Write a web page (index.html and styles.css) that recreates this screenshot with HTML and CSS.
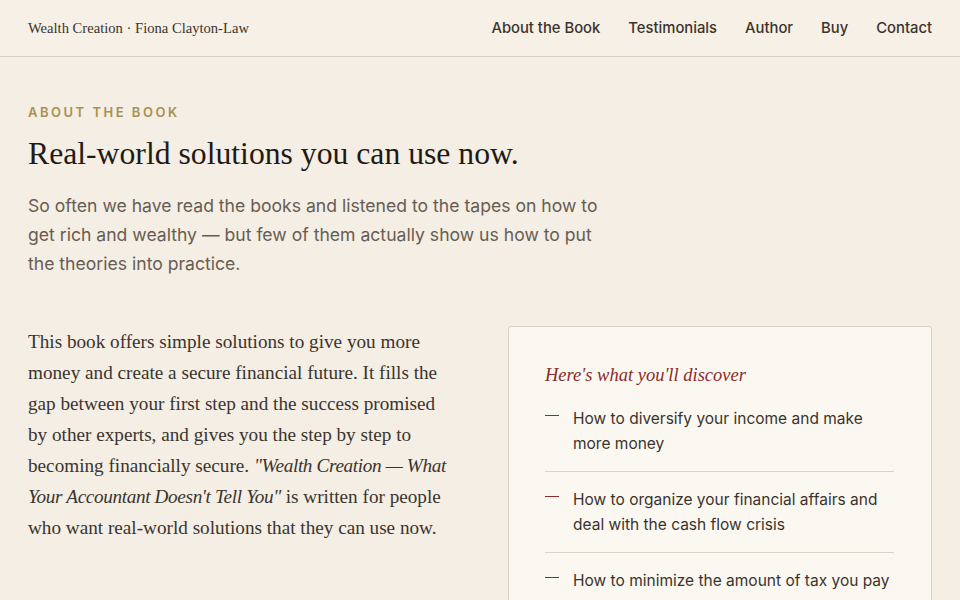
FILE: index.html
```html
<!DOCTYPE html>
<html>
<head>
    <title>Wealth Creation · Fiona Clayton-Law</title>
    <link rel="stylesheet" href="styles.css">
</head>
<body>
    <header class="site-header">
        <div class="brand">Wealth Creation · Fiona Clayton-Law</div>
        <nav class="nav">
            <a href="#about">About the Book</a>
            <a href="#testimonials">Testimonials</a>
            <a href="#author">Author</a>
            <a href="#buy">Buy</a>
            <a href="#contact">Contact</a>
        </nav>
    </header>

    <main class="about" id="about">
        <div class="eyebrow">About the Book</div>
        <h1 class="title">Real-world solutions you can use now.</h1>
        <p class="lead">So often we have read the books and listened to the tapes on how to get rich and wealthy — but few of them actually show us how to put the theories into practice.</p>

        <div class="columns">
            <p class="body-copy">This book offers simple solutions to give you more money and create a secure financial future. It fills the gap between your first step and the success promised by other experts, and gives you the step by step to becoming financially secure. <em>"Wealth Creation — What Your Accountant Doesn't Tell You"</em> is written for people who want real-world solutions that they can use now.</p>

            <aside class="discover">
                <h3>Here's what you'll discover</h3>
                <ul>
                    <li><span class="dash"></span><span>How to diversify your income and make more money</span></li>
                    <li><span class="dash"></span><span>How to organize your financial affairs and deal with the cash flow crisis</span></li>
                    <li><span class="dash"></span><span>How to minimize the amount of tax you pay</span></li>
                    <li><span class="dash"></span><span>How to build wealth through property and shares</span></li>
                </ul>
            </aside>
        </div>
    </main>
</body>
</html>
```

FILE: styles.css
```css
body { margin: 0; background: #f4eee4; color: #2a2520; font-family: Inter, "Noto Sans", sans-serif; }
.site-header { height: 56px; padding: 0 28px; display: flex; align-items: center; justify-content: space-between; background: #f6f0e6; border-bottom: 1px solid #d9cfc3; }
.brand { font-family: "Liberation Serif", serif; font-size: 14.6px; color: #3a342e; }
.nav { display: flex; gap: 28px; }
.nav a { font-size: 14.8px; font-weight: 500; color: #3b332c; text-decoration: none; }

.about { padding: 47px 28px 0; }
.eyebrow { font-size: 13px; line-height: 16px; font-weight: 600; letter-spacing: 2.5px; text-transform: uppercase; color: #a8914f; }
.title { margin: 15px 0 0; font-family: "Liberation Serif", serif; font-size: 31.7px; line-height: 38px; font-weight: 400; color: #1e1a16; }
.lead { margin: 18px 0 0; max-width: 580px; font-size: 17.6px; line-height: 29px; color: #675c52; }

.columns { margin-top: 48px; display: grid; grid-template-columns: 1fr 1fr; gap: 56px; align-items: start; }
.body-copy { margin: 0; font-family: "Liberation Serif", serif; font-size: 19.2px; line-height: 31px; color: #3a342e; }
.body-copy em { letter-spacing: -0.35px; }

.discover { background: #fbf8f1; border: 1px solid #d9cfc0; border-radius: 3px; padding: 34px 37px 30px 36px; }
.discover h3 { margin: 0 0 2px; font-family: "Liberation Serif", serif; font-style: italic; font-weight: 400; font-size: 18.5px; line-height: 28px; color: #8a2c2c; }
.discover ul { list-style: none; margin: 0; padding: 0; }
.discover li { display: flex; gap: 14px; padding: 15px 0; font-size: 15.5px; line-height: 25px; color: #3a332d; border-bottom: 1px solid #dcd3c6; }
.dash { flex: 0 0 14px; height: 1px; margin-top: 9px; background: #8a2c2c; }
```
